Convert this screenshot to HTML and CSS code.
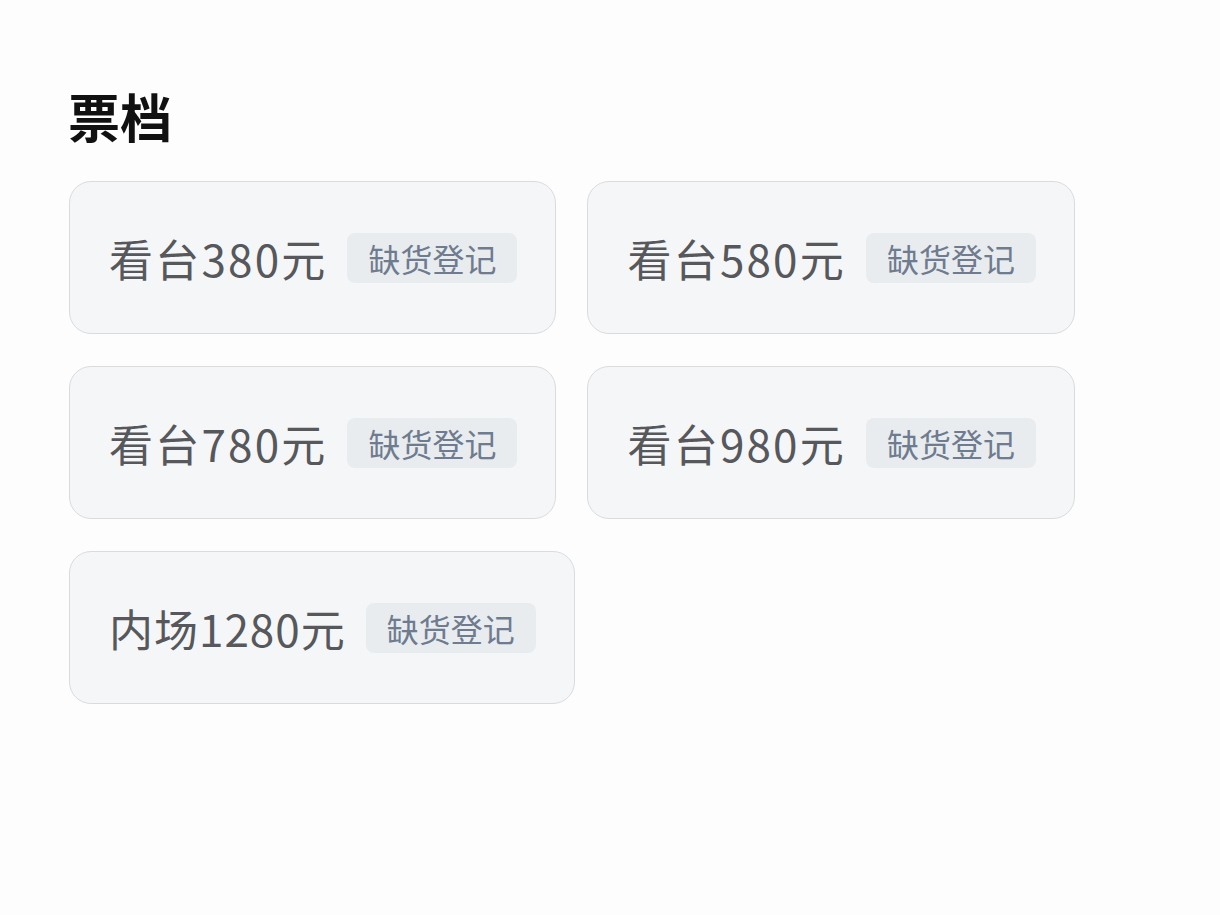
FILE: index.html
```html
<!DOCTYPE html>
<html lang="zh-CN">
<head>
<meta charset="utf-8">
<title>票档</title>
<link rel="stylesheet" href="styles.css">
</head>
<body>
<main class="page">
  <h1 class="title">票档</h1>
  <div class="tiers">
    <div class="tier"><span class="name">看台380元</span><span class="tag">缺货登记</span></div>
    <div class="tier"><span class="name">看台580元</span><span class="tag">缺货登记</span></div>
    <div class="tier"><span class="name">看台780元</span><span class="tag">缺货登记</span></div>
    <div class="tier"><span class="name">看台980元</span><span class="tag">缺货登记</span></div>
    <div class="tier"><span class="name">内场1280元</span><span class="tag">缺货登记</span></div>
  </div>
</main>
</body>
</html>
```
FILE: styles.css
```css
html, body {
  margin: 0;
  padding: 0;
  background: #fdfdfd;
}
body {
  font-family: "Noto Sans CJK SC", "Noto Sans", sans-serif;
  width: 1220px;
  height: 915px;
  overflow: hidden;
}
.page {
  padding: 80px 0 0 68px;
}
.title {
  margin: 0;
  font-size: 52px;
  line-height: 72px;
  font-weight: 700;
  color: #111;
}
.tiers {
  margin-top: 29px;
  margin-left: 1px;
  display: flex;
  flex-wrap: wrap;
  column-gap: 31px;
  row-gap: 32px;
  width: 1100px;
}
.tier {
  box-sizing: border-box;
  height: 153px;
  display: flex;
  align-items: center;
  padding: 0 38px 0 39px;
  background: #f5f6f8;
  border: 1.5px solid #d9dcdf;
  border-radius: 22px;
}
.name {
  font-size: 44px;
  color: #56585b;
  line-height: 1;
  letter-spacing: 2.2px;
}
.tier:last-child .name {
  letter-spacing: 1px;
}
.tag {
  margin-left: 20px;
  height: 50px;
  padding: 0 21px;
  display: flex;
  align-items: center;
  background: #e8ecef;
  border-radius: 8px;
  font-size: 32px;
  color: #6f7b8e;
}
```
